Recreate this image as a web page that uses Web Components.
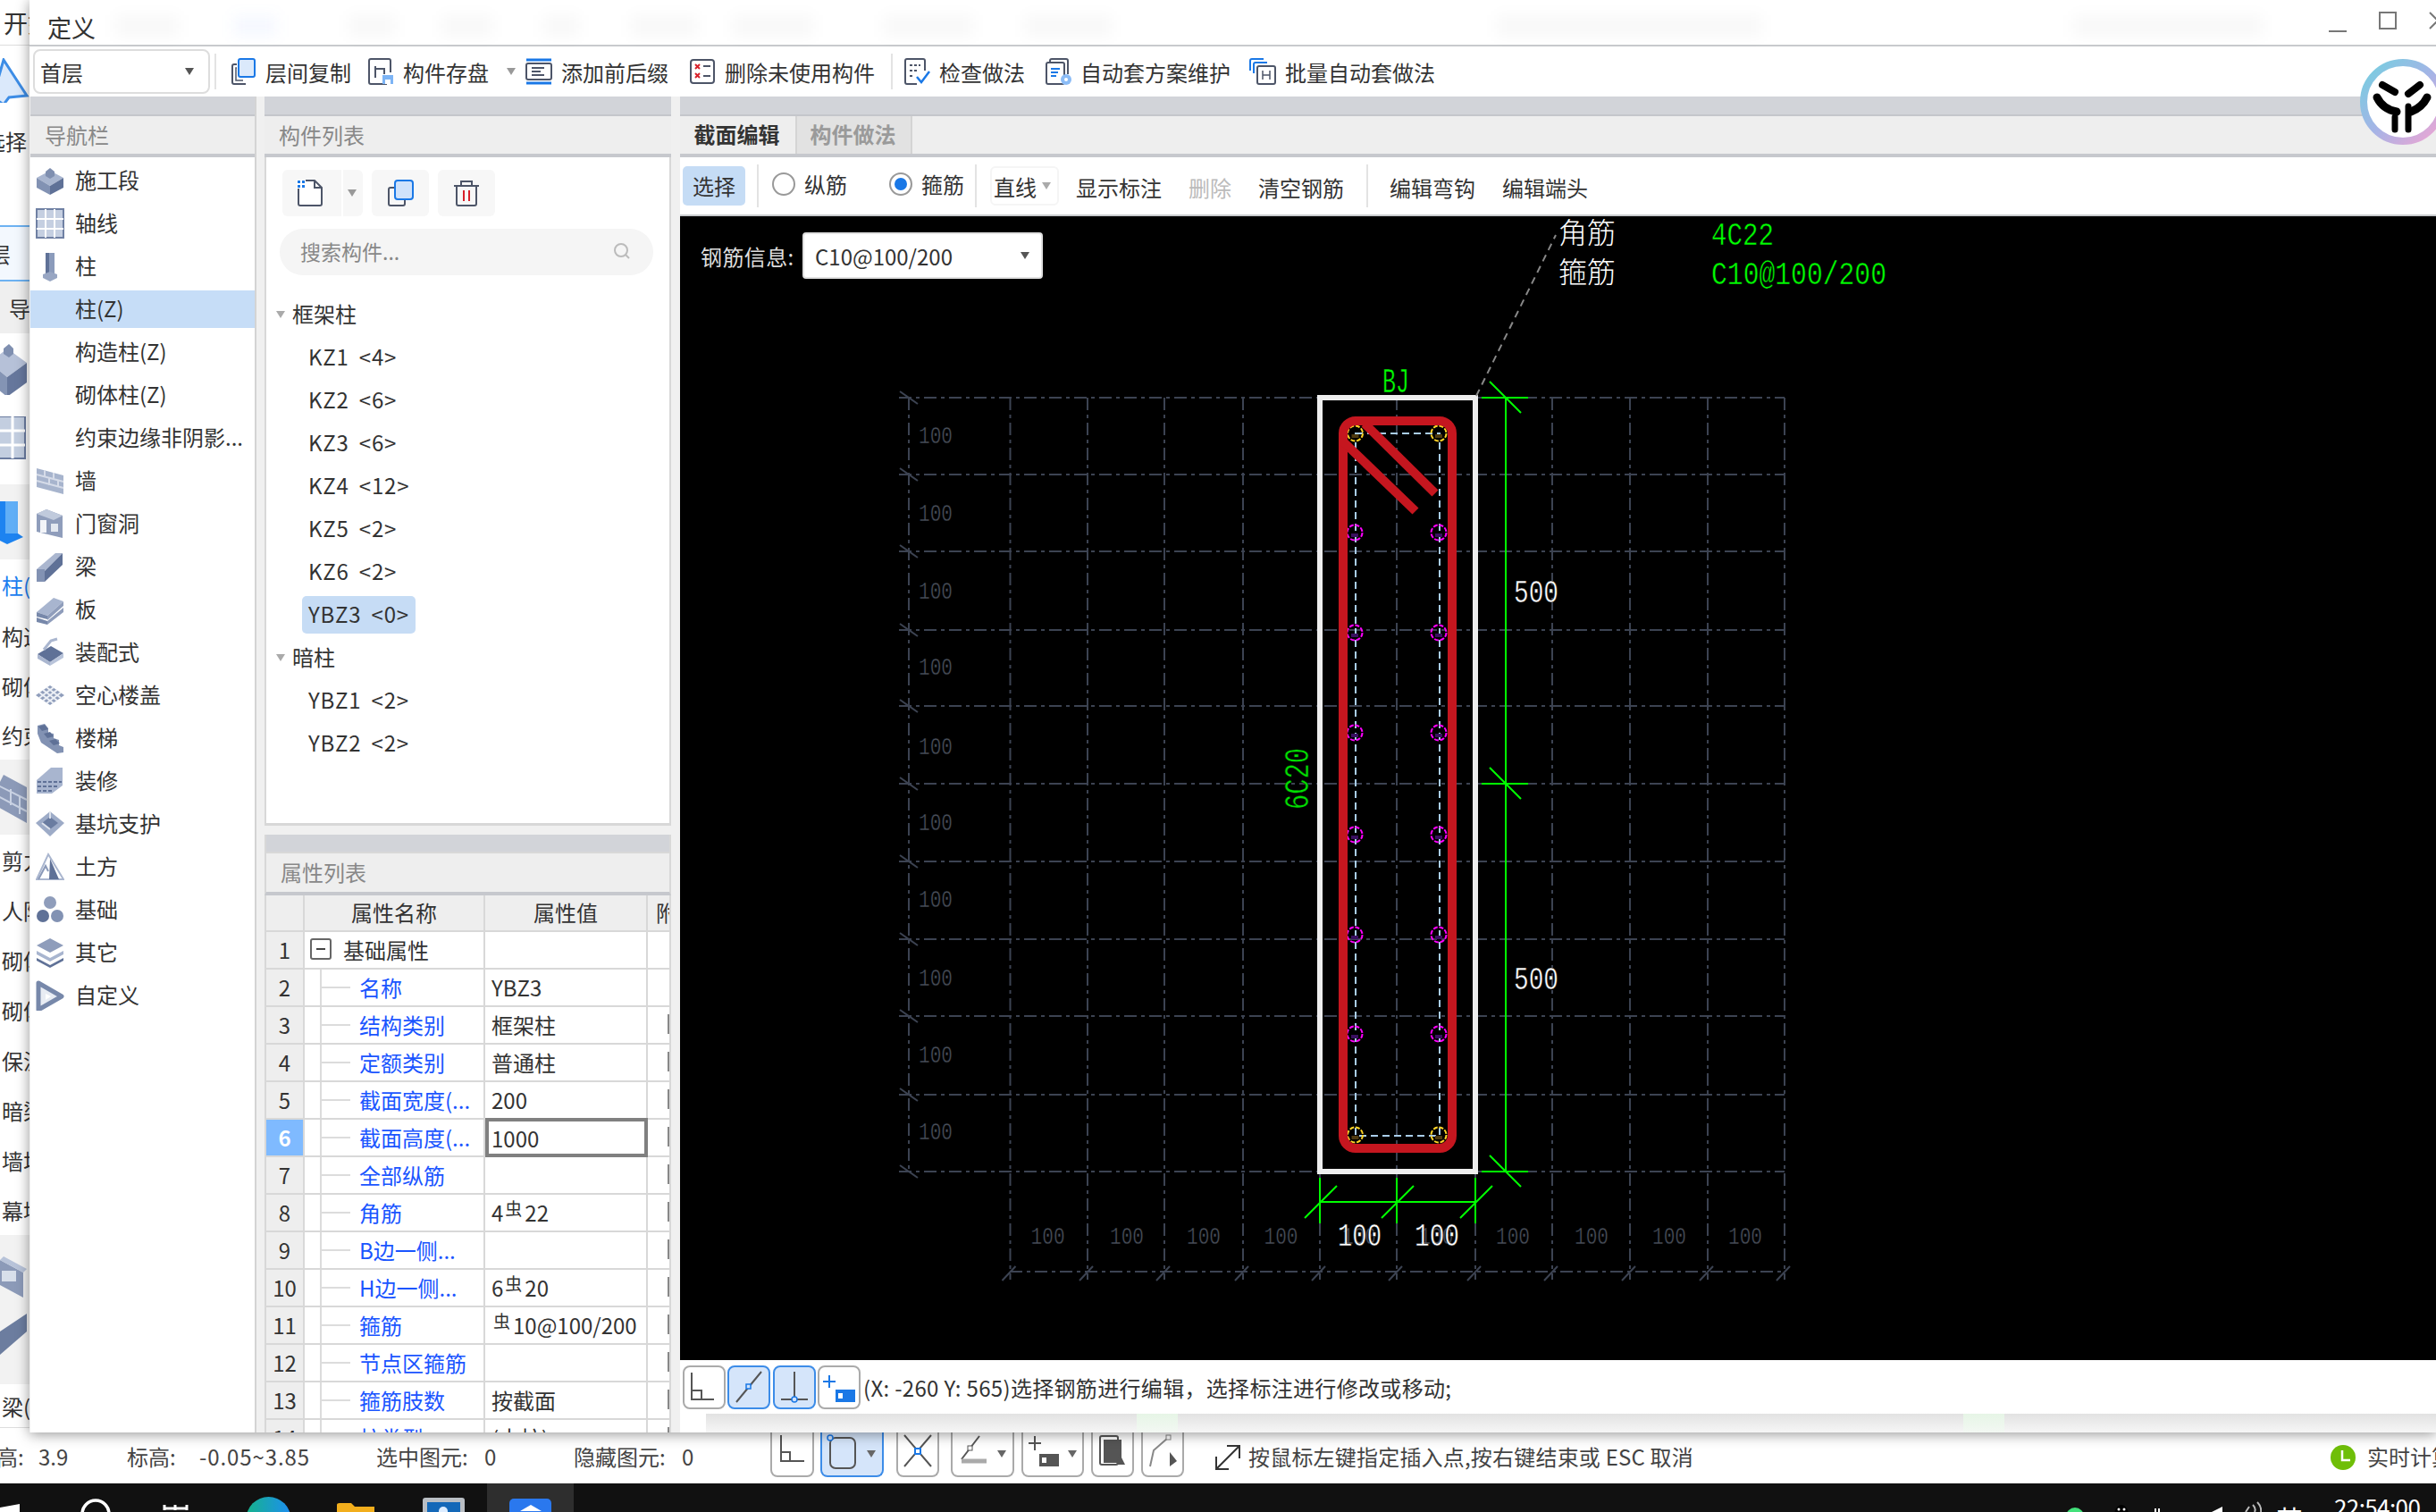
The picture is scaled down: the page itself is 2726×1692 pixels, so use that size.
<!DOCTYPE html>
<html lang="zh">
<head>
<meta charset="utf-8">
<title>定义</title>
<style>
html,body{margin:0;padding:0;width:2726px;height:1692px;overflow:hidden;background:#fff}
body{font-family:"Noto Sans CJK SC","Liberation Sans",sans-serif;font-size:24px;color:#333}
</style>
</head>
<body>
<app-frame>
  <back-rail slot="rail"></back-rail>
  <cad-dialog slot="dialog">
    <title-bar></title-bar>
    <main-toolbar></main-toolbar>
    <dialog-body>
      <nav-panel>
        <nav-item icon="seg">施工段</nav-item>
        <nav-item icon="grid">轴线</nav-item>
        <nav-item icon="col">柱</nav-item>
        <nav-item sel>柱(Z)</nav-item>
        <nav-item>构造柱(Z)</nav-item>
        <nav-item>砌体柱(Z)</nav-item>
        <nav-item>约束边缘非阴影...</nav-item>
        <nav-item icon="wall">墙</nav-item>
        <nav-item icon="door">门窗洞</nav-item>
        <nav-item icon="beam">梁</nav-item>
        <nav-item icon="slab">板</nav-item>
        <nav-item icon="prefab">装配式</nav-item>
        <nav-item icon="hollow">空心楼盖</nav-item>
        <nav-item icon="stair">楼梯</nav-item>
        <nav-item icon="deco">装修</nav-item>
        <nav-item icon="pit">基坑支护</nav-item>
        <nav-item icon="earth">土方</nav-item>
        <nav-item icon="found">基础</nav-item>
        <nav-item icon="other">其它</nav-item>
        <nav-item icon="custom">自定义</nav-item>
      </nav-panel>
      <comp-panel>
        <tree-group>框架柱</tree-group>
        <tree-item>KZ1 &lt;4&gt;</tree-item>
        <tree-item>KZ2 &lt;6&gt;</tree-item>
        <tree-item>KZ3 &lt;6&gt;</tree-item>
        <tree-item>KZ4 &lt;12&gt;</tree-item>
        <tree-item>KZ5 &lt;2&gt;</tree-item>
        <tree-item>KZ6 &lt;2&gt;</tree-item>
        <tree-item sel>YBZ3 &lt;0&gt;</tree-item>
        <tree-group>暗柱</tree-group>
        <tree-item>YBZ1 &lt;2&gt;</tree-item>
        <tree-item>YBZ2 &lt;2&gt;</tree-item>
        <prop-table slot="props">
          <prop-row n="1" group name="基础属性"></prop-row>
          <prop-row n="2" name="名称">YBZ3</prop-row>
          <prop-row n="3" name="结构类别">框架柱</prop-row>
          <prop-row n="4" name="定额类别">普通柱</prop-row>
          <prop-row n="5" name="截面宽度(...">200</prop-row>
          <prop-row n="6" name="截面高度(..." edit>1000</prop-row>
          <prop-row n="7" name="全部纵筋"></prop-row>
          <prop-row n="8" name="角筋">4<small-sym></small-sym>22</prop-row>
          <prop-row n="9" name="B边一侧..."></prop-row>
          <prop-row n="10" name="H边一侧...">6<small-sym></small-sym>20</prop-row>
          <prop-row n="11" name="箍筋"><small-sym></small-sym>10@100/200</prop-row>
          <prop-row n="12" name="节点区箍筋"></prop-row>
          <prop-row n="13" name="箍筋肢数">按截面</prop-row>
          <prop-row n="14" name="柱类型">(中柱)</prop-row>
        </prop-table>
      </comp-panel>
      <section-panel></section-panel>
    </dialog-body>
  </cad-dialog>
  <status-bar slot="status"></status-bar>
  <task-bar slot="task"></task-bar>
</app-frame>
<script>
function def(name, css, html){
  customElements.define(name, class extends HTMLElement{
    connectedCallback(){
      if(this.shadowRoot) return;
      const r=this.attachShadow({mode:'open'});
      r.innerHTML='<style>'+css+'</style>'+(typeof html==='function'?html(this):html);
    }
  });
}
const BL='#1a78e6', DK='#4d5568';
const arrow=(c='#666')=>`<svg width="12" height="8" viewBox="0 0 12 8" style="display:block"><path d="M1 0H11L6 8Z" fill="${c}"/></svg>`;

def('small-sym',':host{display:inline-block;font-size:19px;line-height:1;vertical-align:7px;margin:0 3px 0 2px}','虫');

def('app-frame',`
:host{display:grid;grid-template-columns:33px 2693px;grid-template-rows:1603px 57px 32px;width:2726px;height:1692px;overflow:hidden}
.r{grid-column:1;grid-row:1;min-width:0;overflow:hidden}
.d{grid-column:2;grid-row:1;position:relative;z-index:2;box-shadow:0 2px 14px rgba(0,0,0,.42);min-width:0}
.s{grid-column:1/3;grid-row:2;min-width:0}
.t{grid-column:1/3;grid-row:3;min-width:0}`,
`<div class="r"><slot name="rail"></slot></div><div class="d"><slot name="dialog"></slot></div><div class="s"><slot name="status"></slot></div><div class="t"><slot name="task"></slot></div>`);

/* ---- back window sliver ---- */
def('back-rail',`
:host{display:flex;flex-direction:column;width:33px;height:1603px;background:#fff;overflow:hidden;white-space:nowrap}
.row{display:flex;align-items:center;overflow:hidden;flex:none;padding-left:2px;box-sizing:border-box}
svg{flex:none}
.blue{color:#1b7df0}`,
()=>{
 const rows=['剪力墙','人防门框墙','砌体墙','砌体加筋','保温墙','暗梁','墙垛','幕墙'];
 return `<div class="row" style="height:51px;border-bottom:1px solid #ddd;padding-left:4px;font-size:27px">开始</div>
 <div class="row" style="height:78px;padding:0;"><svg width="33" height="50" viewBox="0 0 33 50"><path d="M-8 44 L4 2 L30 42 L10 44 L4 52 Z" fill="#dbe9fb" stroke="#3d8de6" stroke-width="3"/></svg></div>
 <div class="row" style="height:56px;padding-left:0"><span style="margin-left:-18px">选择</span></div>
 <div class="row" style="height:67px"></div>
 <div class="row" style="height:63px;background:#f3f8fe;border-top:2px solid #6db2f2;border-bottom:2px solid #6db2f2;padding-left:0"><span style="margin-left:-36px">首层</span></div>
 <div class="row" style="height:58px;background:#efefef;padding-left:10px">导航</div>
 <div class="row" style="height:77px;padding:0;"><svg width="33" height="60" viewBox="0 0 33 60"><path d="M-12 24L8 8L30 24L8 40Z" fill="#b6c1d8"/><path d="M-12 24L8 40V62L-12 46Z" fill="#8494b4"/><path d="M8 40L30 24V46L8 62Z" fill="#66779c"/><path d="M4 8L10 3L15 8V14L10 18L4 14Z" fill="#7f8fb0"/></svg></div>
 <div class="row" style="height:80px;padding:0"><svg width="33" height="48" viewBox="0 0 33 48"><rect x="-12" y="0" width="40" height="47" fill="#c3cee0" stroke="#6b7ca0" stroke-width="2"/><path d="M-12 16H28M-12 32H28M14 0V47" stroke="#fff" stroke-width="3"/></svg></div>
 <div class="row" style="height:12px"></div>
 <div class="row" style="height:84px;background:#f2f2f2;padding:0"><svg width="33" height="54" viewBox="0 0 33 54"><path d="M-4 4H20V40L26 44L8 52L-8 44L-4 40Z" fill="#1d83f0"/><path d="M6 4H20V40H6Z" fill="#60aef6"/></svg></div>
 <div class="row blue" style="height:57px">柱(Z)</div>
 <div class="row" style="height:56px">构造柱</div>
 <div class="row" style="height:56px">砌体柱</div>
 <div class="row" style="height:55px">约束边缘</div>
 <div class="row" style="height:84px;background:#f2f2f2;padding:0"><svg width="33" height="62" viewBox="0 0 33 62"><path d="M-2 18L4 6L30 20V60L-2 42Z" fill="#8c9ab8"/><path d="M-2 18L30 34M-2 30L30 47M12 22V40M22 30V50" stroke="#c9d2e3" stroke-width="2"/></svg></div>
 ${rows.map(r=>`<div class="row" style="height:56px">${r}</div>`).join('')}
 <div class="row" style="height:167px;background:#f2f2f2;padding:0;flex-direction:column;align-items:flex-start;justify-content:flex-start"><svg width="33" height="50" viewBox="0 0 33 50" style="margin-top:24px"><path d="M0 4L26 18V46L0 32Z" fill="#8c9ab8"/><path d="M0 4L4 0L30 14L26 18Z" fill="#b8c3d9"/><rect x="2" y="16" width="16" height="12" fill="#d8dfea"/></svg><svg width="33" height="54" viewBox="0 0 33 54" style="margin-top:14px"><path d="M0 20L30 0V20L0 46Z" fill="#6c7d9f"/></svg></div>
 <div class="row" style="height:48px">梁(L)</div>
 <div class="row" style="height:6px;border-top:1px solid #ddd"></div>`;
});

/* ---- dialog shell ---- */
def('cad-dialog',`
:host{display:flex;flex-direction:column;width:2693px;height:1603px;background:#fff;position:relative;overflow:hidden}
.logo{position:absolute;left:2607px;top:65px;width:98px;height:98px;z-index:3}`,
`<slot></slot><div class="logo"><svg width="98" height="98" viewBox="0 0 98 98"><defs><linearGradient id="g" x1="0" y1="0" x2="1" y2="1"><stop offset="0" stop-color="#74d0e0"/><stop offset=".5" stop-color="#a5b4e6"/><stop offset="1" stop-color="#f3a4d2"/></linearGradient></defs><circle cx="49" cy="49" r="44" fill="#fff" stroke="url(#g)" stroke-width="8"/><g fill="none" stroke="#000" stroke-linecap="round"><path d="M26 30L40 38M68 30L55 40" stroke-width="8"/><path d="M20 44C24 52 30 58 42 60M76 44C72 52 66 57 58 60" stroke-width="9"/><path d="M40 66V80M55 54V80" stroke-width="7"/></g></svg></div>`);

def('title-bar',`
:host{display:flex;align-items:center;height:50px;border-bottom:2px solid #c8cacd;background:#fff;flex:none;box-sizing:content-box}
.t{font-size:27px;margin-left:20px;padding-top:10px;width:70px;flex:none;color:#333}
.sm{flex:none;height:24px;background:rgba(0,0,0,.028);filter:blur(8px);margin-top:8px}
.ctl{flex:none}`,
()=>{
 const sm=[[71,96],[49,228,'rgba(60,110,255,.05)'],[52,357],[57,461],[40,575],[74,673],[90,787],[100,956],[97,1114],[296,1642],[212,2287]];
 let x=90, h='';
 sm.forEach(s=>{h+=`<div class="sm" style="width:${s[0]}px;margin-left:${s[1]-x}px;${s[2]?'background:'+s[2]:''}"></div>`; x=s[1]+s[0];});
 return `<div class="t">定义</div>${h}
 <svg class="ctl" width="20" height="20" viewBox="0 0 20 20" style="margin-left:${2573-x}px;margin-top:6px"><path d="M0 17H20" stroke="#777" stroke-width="2"/></svg>
 <svg class="ctl" width="20" height="20" viewBox="0 0 20 20" style="margin-left:36px;margin-top:-4px"><rect x="1" y="1" width="18" height="18" fill="none" stroke="#777" stroke-width="2"/></svg>
 <svg class="ctl" width="20" height="20" viewBox="0 0 20 20" style="margin-left:36px;margin-top:-4px"><path d="M1 1L19 19M19 1L1 19" stroke="#777" stroke-width="2"/></svg>`;
});

const TI={
 copy:`<rect x="10" y="1" width="18" height="20" rx="2" fill="#dbe9fb" stroke="${BL}" stroke-width="2"/><path d="M8 7H5a2 2 0 0 0-2 2V27a2 2 0 0 0 2 2H18" fill="none" stroke="${DK}" stroke-width="2"/><path d="M8 11H7V25H15" fill="none" stroke="${DK}" stroke-width="1.5"/>`,
 save:`<path d="M22 29H4a2 2 0 0 1-2-2V3a2 2 0 0 1 2-2H24a2 2 0 0 1 2 2V16" fill="none" stroke="${DK}" stroke-width="2"/><path d="M9 9V22M9 12H19V18" fill="none" stroke="${DK}" stroke-width="2"/><rect x="17" y="19" width="12" height="10" fill="#7db4f5"/><rect x="20" y="24" width="6" height="5" fill="#fff"/>`,
 fix:`<path d="M1 2H29M1 28H29" stroke="${BL}" stroke-width="3"/><rect x="1" y="6" width="28" height="18" rx="2" fill="none" stroke="${DK}" stroke-width="2"/><path d="M7 11H21M7 15H17M7 19H21" stroke="${DK}" stroke-width="2"/>`,
 del:`<rect x="2" y="2" width="26" height="26" rx="3" fill="none" stroke="${DK}" stroke-width="2"/><path d="M7 7L12 12M12 7L7 12M7 17L12 22M12 17L7 22" stroke="#d8202a" stroke-width="2"/><path d="M16 9H24M16 20H24" stroke="${DK}" stroke-width="2"/>`,
 check:`<path d="M24 14V3a2 2 0 0 0-2-2H4a2 2 0 0 0-2 2V27a2 2 0 0 0 2 2H15" fill="none" stroke="${DK}" stroke-width="2"/><path d="M7 8H19M7 14H16M7 20H12" stroke="${DK}" stroke-width="2" stroke-dasharray="3 2"/><path d="M15 21L20 27L29 15" fill="none" stroke="${BL}" stroke-width="2.5"/>`,
 auto:`<path d="M6 5V3a2 2 0 0 1 2-2H24a2 2 0 0 1 2 2V18" fill="none" stroke="${DK}" stroke-width="2"/><rect x="2" y="5" width="20" height="24" rx="2" fill="#fff" stroke="${DK}" stroke-width="2"/><path d="M7 12H17M7 16H15M7 20H13" stroke="${BL}" stroke-width="2"/><circle cx="24" cy="24" r="6" fill="#8bbcf6"/><circle cx="24" cy="24" r="2" fill="#fff"/>`,
 batch:`<path d="M1 14V3a2 2 0 0 1 2-2H16" fill="none" stroke="${BL}" stroke-width="2"/><path d="M5 17V7a2 2 0 0 1 2-2H20" fill="none" stroke="${BL}" stroke-width="2"/><rect x="9" y="9" width="20" height="20" rx="2" fill="#fff" stroke="${DK}" stroke-width="2"/><path d="M15 14V24M23 14V24M15 19H23" stroke="${DK}" stroke-width="1.5"/>`
};
const tool=(ic,t,x,more='')=>`<span class="i" style="margin-left:${x}px"><svg width="30" height="30" viewBox="0 0 30 30">${TI[ic]}</svg><span>${t}</span>${more}</span>`;
def('main-toolbar',`
:host{display:flex;align-items:center;height:56px;background:#fff;flex:none}
.sel{margin-left:4px;width:198px;height:50px;box-sizing:border-box;border:2px solid #ddd;border-radius:8px;display:flex;align-items:center;justify-content:space-between;padding:0 15px 0 6px;flex:none}
.sep{width:2px;height:40px;background:#e3e3e3;flex:none}
.i{display:inline-flex;align-items:center;gap:10px;flex:none;white-space:nowrap}
.a{margin-left:9px}`,
`<div class="sel"><span>首层</span>${arrow('#555')}</div><div class="sep" style="margin-left:5px"></div>
${tool('copy','层间复制',15)}${tool('save','构件存盘',18,`<span class="a">${arrow('#999')}</span>`)}${tool('fix','添加前后缀',10)}${tool('del','删除未使用构件',23)}
<div class="sep" style="margin-left:18px"></div>
${tool('check','检查做法',12)}${tool('auto','自动套方案维护',22)}${tool('batch','批量自动套做法',21)}`);

def('dialog-body',`:host{display:flex;flex:1;min-height:0;background:#f0f0f0}`,`<slot></slot>`);

def('panel-head',`
:host{display:block;flex:none}
.strip{height:20px;background:#d2d4d9;border-bottom:2px solid #c4c6cb}
.h{background:#eee;border-bottom:4px solid #c6c8cd;display:flex;align-items:center;padding:0 0 2px 16px;box-sizing:content-box;height:40px;color:#888}`,
`<div class="strip"></div><div class="h"><slot></slot></div>`);

/* ---- nav ---- */
const NI={
 seg:`<path d="M1 14L16 6L31 14L16 23Z" fill="#a8b5cf"/><path d="M1 14L16 23V33L1 25Z" fill="#8292b3"/><path d="M16 23L31 14V25L16 33Z" fill="#5f7197"/><path d="M11 7L16 3L21 7V12L16 15L11 12Z" fill="#7f8fb0"/>`,
 grid:`<rect x="1" y="1" width="30" height="32" fill="#c5cfe1" stroke="#6f80a3" stroke-width="2"/><path d="M11 1V33M21 1V33M1 12H31M1 23H31" stroke="#fff" stroke-width="2"/>`,
 col:`<path d="M11 2H21V26H11Z" fill="#8b9bbb"/><path d="M11 2H15V26H11Z" fill="#5f7197"/><path d="M8 26L16 23L24 26V30L16 34L8 30Z" fill="#98a6c3"/>`,
 wall:`<path d="M1 3L31 11V32L1 24Z" fill="#a7b4cd"/><path d="M1 10L31 18M1 17L31 25M10 5V13M20 8V16M15 14V22M25 17V24" stroke="#d5dbe8" stroke-width="2"/>`,
 door:`<path d="M1 6L12 1L30 8V33L1 26Z" fill="#8f9dbb"/><path d="M1 6L12 1L30 8L20 13Z" fill="#c0cadc"/><rect x="5" y="13" width="7" height="14" fill="#f2f4f8"/><rect x="17" y="17" width="8" height="9" fill="#e3e8f0"/>`,
 beam:`<path d="M1 20L22 2H30L10 22Z" fill="#aab6cf"/><path d="M10 22L30 2V15L10 34Z" fill="#5f7197"/><path d="M1 20H10V34H1Z" fill="#8292b3"/>`,
 slab:`<path d="M1 20L20 4L31 8L13 24Z" fill="#a8b5cf"/><path d="M1 20L13 24V28L1 25Z M1 26L13 30V34L1 31Z" fill="#7788aa"/><path d="M13 24L31 8V13L13 29Z M13 30L31 15V20L13 34Z" fill="#8f9dbb"/>`,
 prefab:`<path d="M2 19L17 10L31 18L16 28Z" fill="#5f7197"/><path d="M2 19L16 28V32L2 24Z" fill="#aab6cf"/><path d="M16 28L31 18V23L16 32Z" fill="#b9c4da"/><path d="M9 14L17 4L24 2" fill="none" stroke="#aab6cf" stroke-width="3"/>`,
 hollow:`<path d="M16 6L32 17L16 28L0 17Z" fill="#8f9dbb"/><path d="M8 11L24 23M12 8L28 20M4 14L20 26M24 11L8 23M20 8L4 20M28 14L12 26" stroke="#eef1f6" stroke-width="2"/>`,
 stair:`<path d="M2 3L10 1L14 6V11L20 12V17L26 19V25L31 27V33L24 34L6 22L2 12Z" fill="#8292b3"/><path d="M3 4L10 2L14 7L7 9ZM9 12L16 10L20 15L13 17ZM15 20L22 18L27 23L20 25Z" fill="#5f7197"/>`,
 deco:`<path d="M1 16L17 2H30V22L18 31H1Z" fill="#a8b5cf"/><path d="M2 18H29M2 23H25M2 28H20" stroke="#5f7197" stroke-width="2" stroke-dasharray="4 2"/>`,
 pit:`<path d="M16 3L32 16L16 31L0 16Z" fill="#9dabc7"/><path d="M16 9L25 16L16 23L7 16Z" fill="#6a7ca0"/><path d="M16 3V11M7 16L16 23" stroke="#dde2ec" stroke-width="2"/>`,
 earth:`<path d="M14 3L31 31H1Z" fill="#fff" stroke="#aab6cf" stroke-width="2"/><path d="M16 8L26 31H15Z" fill="#5f7197"/><path d="M3 31L11 16L14 22" fill="none" stroke="#8a99b8" stroke-width="2"/>`,
 found:`<circle cx="16" cy="9" r="7" fill="#8f9dbb"/><circle cx="8" cy="24" r="7" fill="#5f7197"/><circle cx="24" cy="24" r="7" fill="#8292b3"/>`,
 other:`<path d="M16 1L31 9L16 17L1 9Z" fill="#8f9dbb"/><path d="M1 15L16 23L31 15V19L16 27L1 19Z" fill="#a8b5cf"/><path d="M1 23L16 31L31 23V26L16 34L1 26Z" fill="#5f7197"/>`,
 custom:`<path d="M3 3L29 18L3 33Z" fill="#e8ecf3" stroke="#7788aa" stroke-width="5" stroke-linejoin="round"/><path d="M11 15L17 18L11 22Z" fill="#fff"/>`
};
def('nav-panel',`
:host{display:flex;flex-direction:column;width:251px;margin-left:1px;flex:none;background:#fff;height:100%;border-right:2px solid #d4d4d4;box-sizing:content-box}
.l{padding-top:2px}`,
`<panel-head>导航栏</panel-head><div class="l"><slot></slot></div>`);
def('nav-item',`
:host{display:block;height:48px;white-space:nowrap;color:#333;padding:3px 0;box-sizing:border-box}
.x{display:flex;align-items:center;height:42px;padding-left:6px}
:host([sel]) .x{background:#c6ddf7}
.ic{width:32px;height:34px;flex:none;margin-right:12px}
.tx{padding-bottom:3px}
svg{display:block}`,
el=>{const k=el.getAttribute('icon');return `<div class="x"><div class="ic">${k?`<svg width="32" height="34" viewBox="0 0 32 34">${NI[k]}</svg>`:''}</div><span class="tx"><slot></slot></span></div>`});

/* ---- component panel ---- */
def('comp-panel',`
:host{display:flex;flex-direction:column;width:455px;margin-left:9px;flex:none;height:100%;overflow:hidden}
.box{background:#fff;height:748px;box-sizing:border-box;border:2px solid #d8d8d8;border-top:0;border-bottom-width:3px;flex:none;overflow:hidden}
.btns{display:flex;margin:14px 0 0 18px;height:52px}
.b{background:#f7f7f7;border-radius:6px;display:flex;align-items:center;justify-content:center;height:52px;width:64px;margin-left:10px}
.b.n{width:90px;margin-left:0;justify-content:flex-start;padding-left:16px;box-sizing:border-box}
.b.n i{width:2px;height:52px;background:#fff;margin-left:20px;flex:none}
.b.n span{margin-left:4px}
.s{margin:14px 0 0 15px;width:418px;height:52px;border-radius:26px;background:#f5f5f5;display:flex;align-items:center;justify-content:space-between;padding:0 25px 2px 23px;box-sizing:border-box;color:#888;font-size:23px}
.t{margin-top:20px}
.gap{height:10px;flex:none}
.pp{flex:1;min-height:0;overflow:hidden;background:#fff;border-left:2px solid #d8d8d8;border-right:2px solid #d8d8d8;box-sizing:border-box}
.strip{height:19px;background:#d2d4d9;border:2px solid #d8d8d8;border-width:0 2px 2px;flex:none}
.h{background:#eee;border-bottom:4px solid #c6c8cd;display:flex;align-items:center;padding:0 0 3px 16px;box-sizing:content-box;height:40px;color:#888;flex:none}`,
`<panel-head>构件列表</panel-head>
<div class="box">
  <div class="btns">
    <div class="b n"><svg width="30" height="30" viewBox="0 0 30 30"><path d="M20 1H4a2 2 0 0 0-2 2V27a2 2 0 0 0 2 2H26a2 2 0 0 0 2-2V9Z" fill="#fff" stroke="${DK}" stroke-width="2"/><path d="M20 1V9H28" fill="none" stroke="${DK}" stroke-width="2"/><rect x="0" y="0" width="10" height="10" fill="#fff"/><path d="M1 1H4V4H1ZM6 1H9V4H6ZM1 6H4V9H1ZM6 6H9V9H6Z" fill="${BL}"/></svg><i></i><span>${arrow('#999')}</span></div>
    <div class="b"><svg width="30" height="30" viewBox="0 0 30 30"><path d="M8 9H4a2 2 0 0 0-2 2V27a2 2 0 0 0 2 2H18a2 2 0 0 0 2-2V23" fill="none" stroke="${DK}" stroke-width="2"/><rect x="9" y="1" width="20" height="21" rx="3" fill="#cfe2fb" stroke="${BL}" stroke-width="2"/></svg></div>
    <div class="b"><svg width="30" height="30" viewBox="0 0 30 30"><path d="M1 7H29M9 7V2H21V7" fill="none" stroke="${DK}" stroke-width="2"/><path d="M4 7V27a2 2 0 0 0 2 2H24a2 2 0 0 0 2-2V7" fill="none" stroke="${DK}" stroke-width="2"/><path d="M12 12V24M18 12V24" stroke="#d8202a" stroke-width="2"/></svg></div>
  </div>
  <div class="s"><span>搜索构件...</span><svg width="20" height="20" viewBox="0 0 20 20"><circle cx="9" cy="9" r="7" fill="none" stroke="#bbb" stroke-width="2"/><path d="M14 14L18 18" stroke="#bbb" stroke-width="2"/></svg></div>
  <div class="t"><slot></slot></div>
</div>
<div class="gap"></div>
<div class="strip"></div>
<div class="h" style="border-left:2px solid #d8d8d8;border-right:2px solid #d8d8d8">属性列表</div>
<div class="pp"><slot name="props"></slot></div>`);
def('tree-group',`
:host{display:flex;align-items:center;height:48px;padding-left:10px;white-space:nowrap}
span{margin-right:7px;display:block}
b{font-weight:400;padding-bottom:4px}`,
`<span>${arrow('#aaa')}</span><b><slot></slot></b>`);
def('tree-item',`
:host{display:flex;align-items:center;height:48px;margin-left:40px;white-space:pre;word-spacing:5px}
.x{height:42px;display:flex;align-items:center;padding:0 7px 3px 7px;box-sizing:border-box;border-radius:5px;letter-spacing:.8px;margin-top:-1px}
:host([sel]) .x{background:#c6dcf5}`,
`<div class="x"><slot></slot></div>`);

/* ---- property table ---- */
const COLS='grid-template-columns:43px 202px 182px 24px;';
def('prop-table',`
:host{display:block}
.hd{display:grid;${COLS}height:41px;background:#eee;text-align:center;line-height:37px}
.hd div{border-right:2px solid #d8d8d8;box-sizing:border-box;overflow:hidden;white-space:nowrap;border-bottom:2px solid #d8d8d8}
.hd div:last-child{border-right:0;text-align:left;padding-left:9px}`,
`<div class="hd"><div></div><div>属性名称</div><div>属性值</div><div>附加</div></div><slot></slot>`);
def('prop-row',`
:host{display:grid;${COLS}height:42px;font-size:24px}
.c{border-right:2px solid #d8d8d8;border-bottom:2px solid #d8d8d8;box-sizing:border-box;display:flex;align-items:center;white-space:nowrap;overflow:hidden;padding-bottom:2px}
.n{background:#eee;justify-content:center}
:host([n="6"]) .n{background:#7fbaff;color:#fff;font-weight:700}
.nm{padding-left:61px;color:#1a55ff;background:linear-gradient(#dcdcdc,#dcdcdc) 17px 0/2px 100% no-repeat,linear-gradient(#dcdcdc,#dcdcdc) 18px 19px/33px 2px no-repeat}
:host([group]) .nm{padding-left:6px;color:#333;background:none}
.box{width:24px;height:24px;border:2px solid #666;border-radius:3px;box-sizing:border-box;display:flex;align-items:center;justify-content:center;margin-right:13px;flex:none}
.box i{display:block;width:10px;height:2px;background:#444}
.v{padding-left:7px;color:#333}
:host([edit]) .v{border:4px solid #808080;padding:0 0 0 3px;margin-top:-2px;height:44px}
.x{border-right:0;justify-content:flex-end}
.x i{display:block;width:2px;height:22px;background:#888}`,
el=>{
  const g=el.hasAttribute('group'); const n=+el.getAttribute('n');
  return `<div class="c n">${n}</div><div class="c nm">${g?'<span class="box"><i></i></span>':''}${el.getAttribute('name')}</div><div class="c v"><span><slot></slot></span></div><div class="c x">${n>2?'<i></i>':''}</div>`;
});

/* ---- section editor ---- */
const item=(t,ml,st='margin-top:2px')=>`<span style="margin-left:${ml}px;flex:none;${st}">${t}</span>`;
const sep=ml=>`<i class="sep" style="margin-left:${ml}px"></i>`;
def('section-panel',`
:host{display:flex;flex-direction:column;flex:1;min-width:0;height:100%;margin-left:10px;background:#fff}
.strip{height:20px;background:#d2d4d9;border-bottom:2px solid #c4c6cb;flex:none}
.tabs{height:42px;background:#eee;border-bottom:4px solid #c6c8cd;display:flex;flex:none;font-weight:700}
.tab{width:131px;text-align:center;line-height:40px;border-right:2px solid #d4d4d4;box-sizing:border-box;padding-right:2px;color:#333}
.tab.off{background:#e2e2e2;color:#9a9a9a;width:129px}
.tb{height:64px;border-bottom:2px solid #c8cacd;display:flex;align-items:center;flex:none;white-space:nowrap}
.on{margin-left:3px;width:70px;height:44px;border-radius:5px;background:#c5dcf5;text-align:center;line-height:44px;flex:none}
.sep{width:2px;height:48px;background:#e3e3e3;flex:none;display:block}
.r{width:26px;height:26px;box-sizing:border-box;border:2px solid #999;border-radius:50%;flex:none;display:flex;align-items:center;justify-content:center;margin-top:-4px}
.r i{width:14px;height:14px;border-radius:50%;background:${BL};display:block}
.line{margin-left:15px;width:77px;height:44px;border:2px solid #f5f5f5;border-radius:6px;box-sizing:border-box;display:flex;align-items:center;padding-left:2px;flex:none;gap:5px}
.bot{height:60px;background:#fff;display:flex;align-items:center;flex:none;white-space:nowrap}
.bb{width:48px;height:49px;border:2px solid #aaa;border-radius:8px;box-sizing:border-box;background:#fff;flex:none;margin-left:2px}
.bb.a{background:#d5e5fa;border-color:#3c8ce8}
.bb svg{display:block}
.msg{margin-left:3px;letter-spacing:.32px}
.foot{flex:1;min-height:0;background:linear-gradient(#e2e2e2,#f6f6f6);margin-left:29px;display:flex}
.sp{width:46px;height:100%;background:linear-gradient(#e6f5e6,#f3f8f3);flex:none}`,
`<div class="strip"></div>
<div class="tabs"><div class="tab">截面编辑</div><div class="tab off">构件做法</div></div>
<div class="tb">
 <div class="on">选择</div>${sep(13)}
 <span class="r" style="margin-left:15px"></span>${item('纵筋',10,'margin-top:-6px')}
 <span class="r" style="margin-left:47px"><i></i></span>${item('箍筋',10,'margin-top:-6px')}
 ${sep(12)}
 <div class="line"><span>直线</span>${arrow('#aaa')}</div>
 ${item('显示标注',19)}${item('删除',30,'color:#bbb;margin-top:2px')}${item('清空钢筋',30)}${sep(25)}${item('编辑弯钩',24)}${item('编辑端头',30)}
</div>
<cad-canvas></cad-canvas>
<div class="bot">
 <div class="bb" style="margin-left:3px"><svg width="44" height="45" viewBox="0 0 44 45"><path d="M8 6V36H33M8 26H19V36" fill="none" stroke="#555" stroke-width="2"/></svg></div>
 <div class="bb a"><svg width="44" height="45" viewBox="0 0 44 45"><path d="M8 39L36 5" stroke="#555" stroke-width="2"/><rect x="19" y="19" width="5" height="5" fill="#cfe2fb" stroke="${BL}" stroke-width="1.5"/></svg></div>
 <div class="bb a" style="margin-left:3px"><svg width="44" height="45" viewBox="0 0 44 45"><path d="M22 5V36M7 36H37" stroke="#555" stroke-width="2"/><circle cx="22" cy="36" r="3" fill="#cfe2fb" stroke="${BL}" stroke-width="1.5"/></svg></div>
 <div class="bb"><svg width="44" height="45" viewBox="0 0 44 45"><path d="M4 16H18M11 9V23" stroke="${BL}" stroke-width="2"/><rect x="18" y="25" width="22" height="14" fill="${BL}"/><rect x="21" y="29" width="5" height="6" fill="#fff"/></svg></div>
 <span class="msg">(X: -260 Y: 565)选择钢筋进行编辑，选择标注进行修改或移动;</span>
</div>
<div class="foot"><div style="width:482px"></div><div class="sp"></div><div style="width:879px"></div><div class="sp"></div></div>`);

def('cad-canvas',`
:host{display:block;flex:none;width:1965px;height:1280px;background:#000;position:relative;overflow:hidden}
svg{display:block}
.lb{position:absolute;left:23px;top:28px;color:#ddd;line-height:34px;letter-spacing:.4px}
.sl{position:absolute;left:137px;top:18px;width:269px;height:52px;background:#fff;border-radius:4px;box-sizing:border-box;border:2px solid #e0e0e0;display:flex;align-items:center;justify-content:space-between;padding:0 12px;color:#333}`,
()=>{
 const H=[445,531,617,705,790,877,964,1051,1137,1225,1311];
 const V=[1130.5,1217,1303,1391,1477,1563,1651,1737,1824,1911,1997];
 const GC='#3c4352', DA='stroke-dasharray="14 5 4 5"';
 let s='';
 s+=`<g stroke="${GC}" stroke-width="2" fill="none">`;
 H.forEach(y=>{s+=`<path d="M1006 ${y}H1997" ${DA}/><path d="M1007 ${y-7}L1027 ${y+7}"/>`});
 s+=`<path d="M1017 445V1311" ${DA}/>`;
 V.forEach(x=>{s+=`<path d="M${x} 445V1432" ${DA}/><path d="M${x-9} 1433L${x+6} 1417"/>`});
 s+=`<path d="M1130 1423H1997" ${DA}/></g>`;
 const gray=(x,y)=>`<text x="${x}" y="${y}" font-family="'Liberation Mono',monospace" font-size="27" fill="#4a505c" stroke="#000" stroke-width=".5" textLength="38" lengthAdjust="spacingAndGlyphs">100</text>`;
 [486.6,574,660.6,746,834.6,920,1006,1094,1180.4,1266].forEach(c=>{s+=gray(1028,c+9)});
 [1172.6,1261,1347,1433.5,1521,1607.5,1693,1781,1868,1953].forEach(c=>{s+=gray(c-19,1392)});
 const ft=(t,x,y,size,len,col)=>`<text x="${x}" y="${y}" font-family="'Liberation Mono',monospace" font-size="${size}" fill="${col}" stroke="#000" stroke-width=".5" textLength="${len}" lengthAdjust="spacingAndGlyphs">${t}</text>`;
 s+=`<rect x="1477" y="445" width="174" height="866" fill="none" stroke="#eeeeee" stroke-width="6"/>`;
 s+=`<rect x="1517" y="485" width="94" height="786" fill="none" stroke="#a9cdea" stroke-width="2" stroke-dasharray="8 5"/>`;
 const bar=(x,y,c,d)=>`<circle cx="${x}" cy="${y}" r="8.5" fill="none" stroke="${c}" stroke-width="2" stroke-dasharray="5 1.7"/><rect x="${x-4}" y="${y+1}" width="8" height="4" fill="${d}"/>`;
 [[1516.5,485],[1610,485],[1516.5,1270],[1610,1270]].forEach(p=>{s+=bar(p[0],p[1],'#ffd426','#4e3a10')});
 [596,708,820,934,1046,1157].forEach(y=>{s+=bar(1516,y,'#ff00ff','#3a1060')+bar(1610,y,'#ff00ff','#3a1060')});
 s+=`<g fill="none" stroke="#c5161f" stroke-width="10"><rect x="1503" y="471" width="122" height="814" rx="14"/><path d="M1527 474L1606 552"/><path d="M1504 495L1584 572"/></g>`;
 s+=`<g stroke="#00ff00" stroke-width="2" fill="none"><path d="M1685 445V1311"/>`;
 [445,877,1311].forEach(y=>{s+=`<path d="M1658 ${y}H1710M1667 ${y-18}L1702 ${y+17}"/>`});
 s+=`<path d="M1477 1345H1651"/>`;
 [1477,1563,1651].forEach(x=>{s+=`<path d="M${x} 1318V1369M${x-17} 1363L${x+19} 1327"/>`});
 s+=`</g>`;
 s+=`<path d="M1652 443L1741 263" stroke="#888" stroke-width="2" stroke-dasharray="8 6" fill="none"/>`;
 s+=ft('100',1497,1394,36,49,'#fff')+ft('100',1583,1394,36,50,'#fff')+ft('500',1694,674,36,50,'#fff')+ft('500',1694,1107,36,50,'#fff');
 s+=ft('BJ',1547,439,38,30,'#00ff00')+ft('4C22',1915,274,36,70,'#00ff00')+ft('C10@100/200',1915,318,36,196,'#00ff00');
 s+=`<text transform="translate(1464 906) rotate(-90)" font-family="'Liberation Mono',monospace" font-size="38" fill="#00e000" stroke="#000" stroke-width=".5" textLength="69" lengthAdjust="spacingAndGlyphs">6C20</text>`;
 s+=`<text x="1744" y="272" font-family="'Noto Sans CJK SC',sans-serif" font-weight="300" font-size="32" fill="#fff">角筋</text><text x="1744" y="316" font-family="'Noto Sans CJK SC',sans-serif" font-weight="300" font-size="32" fill="#fff">箍筋</text>`;
 return `<svg width="1965" height="1280" viewBox="761 242 1965 1280">${s}</svg>
 <div class="lb">钢筋信息:</div><div class="sl"><span>C10@100/200</span>${arrow('#555')}</div>`;
});

/* ---- status bar ---- */
const sb=(w,ml,inner,cls='')=>`<div class="sb ${cls}" style="width:${w}px;margin-left:${ml}px">${inner}</div>`;
const sv=(w,b)=>`<svg width="${w}" height="48" viewBox="0 0 ${w} 48" style="display:block">${b}</svg>`;
const DS='#555';
def('status-bar',`
:host{display:flex;align-items:center;height:57px;background:#fff;white-space:nowrap;color:#444;overflow:hidden}
.tx{flex:none;padding-bottom:4px;box-sizing:border-box}
.sb{height:50px;box-sizing:border-box;border:2px solid #aaa;border-top:0;border-radius:0 0 8px 8px;flex:none;align-self:flex-start;background:#fff}
.sb.a{background:#d5e5fa;border-color:#3c8ce8}
.r{margin-left:auto;display:flex;align-items:center;width:118px;flex:none;gap:13px}
.r span{padding-bottom:4px}`,
`<span class="tx" style="margin-left:-4px;width:47px">高:</span><span class="tx" style="width:99px">3.9</span><span class="tx" style="width:81px">标高:</span><span class="tx" style="width:198px;letter-spacing:.9px">-0.05~3.85</span><span class="tx" style="width:121px">选中图元:</span><span class="tx" style="width:100px">0</span><span class="tx" style="width:121px">隐藏图元:</span><span class="tx" style="width:99px">0</span>
${sb(49,0,sv(45,`<path d="M10 3V32H36M10 22H20V32" fill="none" stroke="${DS}" stroke-width="2"/>`))}
${sb(71,7,sv(67,`<rect x="9" y="6" width="28" height="34" rx="6" fill="none" stroke="${DS}" stroke-width="2"/><circle cx="9" cy="6" r="3" fill="#cfe2fb" stroke="${BL}" stroke-width="1.5"/><path d="M50 20H60L55 28Z" fill="#666"/>`),'a')}
${sb(48,14,sv(44,`<path d="M7 3L37 38M37 3L7 38" stroke="${DS}" stroke-width="2"/><rect x="19" y="18" width="6" height="6" fill="#fff" stroke="${BL}" stroke-width="2"/>`))}
${sb(71,13,sv(67,`<path d="M10 30L30 4" stroke="${DS}" stroke-width="2"/><path d="M10 32H38" stroke="#aaa" stroke-width="5"/><rect x="17" y="15" width="5" height="5" fill="#fff" stroke="${DS}"/><path d="M50 20H60L55 28Z" fill="#666"/>`))}
${sb(70,8,sv(66,`<path d="M6 12H20M13 4V20" stroke="${DS}" stroke-width="2"/><rect x="18" y="24" width="22" height="14" fill="${DS}"/><rect x="21" y="28" width="5" height="6" fill="#fff"/><path d="M50 20H60L55 28Z" fill="#666"/>`))}
${sb(48,8,sv(44,`<rect x="8" y="4" width="20" height="32" rx="2" fill="none" stroke="${DS}" stroke-width="2"/><rect x="12" y="8" width="20" height="26" fill="${DS}"/><path d="M30 24L36 36H26Z" fill="${DS}"/>`))}
${sb(48,8,sv(44,`<path d="M8 38L12 20L28 6" fill="none" stroke="#888" stroke-width="2"/><rect x="26" y="3" width="5" height="5" fill="#fff" stroke="#888"/><path d="M30 22L38 32L30 38Z" fill="${DS}"/>`))}
<svg width="30" height="30" viewBox="0 0 30 30" style="flex:none;margin-left:34px;margin-top:-2px"><path d="M2 28L28 2M14 2H28V16M2 14V28H16" fill="none" stroke="#333" stroke-width="2"/></svg>
<span class="tx" style="margin-left:8px;letter-spacing:.2px">按鼠标左键指定插入点,按右键结束或 ESC 取消</span>
<div class="r"><svg width="28" height="28" viewBox="0 0 28 28" style="flex:none;margin-top:-2px"><circle cx="14" cy="14" r="14" fill="#6fbe08"/><path d="M13 6V17H22" fill="none" stroke="#fff" stroke-width="2.5"/></svg><span>实时计算</span></div>`);

/* ---- taskbar ---- */
def('task-bar',`
:host{display:flex;height:32px;background:#111;overflow:hidden;align-items:flex-start}
.p{flex:none;display:block}
.tile{width:97px;height:32px;background:#2e2e2e;flex:none;display:flex;justify-content:center}
.ime{color:#fff;font-size:30px;line-height:1;margin-top:24px;flex:none}
.time{color:#fff;font-size:26px;line-height:32px;margin-top:10px;letter-spacing:-.6px;flex:none}`,
`<svg class="p" width="22" height="32" viewBox="0 0 22 32"><path d="M0 27L22 23V32H0Z" fill="#fff"/></svg>
<svg class="p" width="34" height="32" viewBox="0 0 34 32" style="margin-left:68px"><circle cx="17" cy="34" r="15" fill="none" stroke="#fff" stroke-width="3.5"/></svg>
<svg class="p" width="29" height="32" viewBox="0 0 29 32" style="margin-left:58px"><path d="M2 28H27M2 24V30M27 24V30M14 24V30" stroke="#fff" stroke-width="3" fill="none"/></svg>
<svg class="p" width="49" height="32" viewBox="0 0 49 32" style="margin-left:65px"><defs><linearGradient id="e" x1="0" y1="0" x2="1" y2="0"><stop offset="0" stop-color="#16b38c"/><stop offset="1" stop-color="#1d8ef0"/></linearGradient></defs><circle cx="24.5" cy="40" r="25" fill="url(#e)"/></svg>
<svg class="p" width="42" height="32" viewBox="0 0 42 32" style="margin-left:52px"><path d="M0 24Q0 22 3 22H16L20 26H42V32H0Z" fill="#f2ae1c"/></svg>
<svg class="p" width="47" height="32" viewBox="0 0 47 32" style="margin-left:54px"><rect x="0" y="16" width="47" height="20" rx="3" fill="#b9bec4"/><rect x="5" y="21" width="37" height="12" fill="#1468b8"/><circle cx="23" cy="31" r="5" fill="#dcecff"/></svg>
<div class="tile" style="margin-left:25px"><svg class="p" width="47" height="32" viewBox="0 0 47 32"><rect x="0" y="17" width="47" height="24" rx="5" fill="#2a78ee"/><path d="M12 31L24 24L36 31Z" fill="#fff"/></svg></div>
<svg class="p" width="20" height="32" viewBox="0 0 20 32" style="margin-left:1670px"><circle cx="10" cy="37" r="10" fill="#42e07a"/></svg>
<svg class="p" width="16" height="32" viewBox="0 0 16 32" style="margin-left:34px"><ellipse cx="8" cy="36" rx="8" ry="12" fill="#000"/><circle cx="5" cy="29" r="1.5" fill="#fff"/><circle cx="11" cy="29" r="1.5" fill="#fff"/></svg>
<svg class="p" width="8" height="32" viewBox="0 0 8 32" style="margin-left:28px"><path d="M2 28V32M6 28V32" stroke="#fff" stroke-width="2"/></svg>
<svg class="p" width="12" height="32" viewBox="0 0 12 32" style="margin-left:57px"><path d="M0 32L12 26V32Z" fill="#fff"/></svg>
<svg class="p" width="20" height="32" viewBox="0 0 20 32" style="margin-left:24px"><path d="M2 32L6 26M12 32Q14 28 10 24M19 32Q20 26 15 21" fill="none" stroke="#bbb" stroke-width="2"/></svg>
<span class="ime" style="margin-left:16px">英</span>
<span class="time" style="margin-left:35px">22:54:00</span>`);
</script>
</body>
</html>
